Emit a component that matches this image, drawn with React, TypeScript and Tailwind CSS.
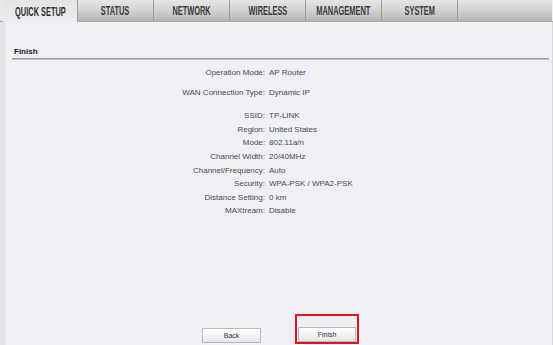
const tabs = ['QUICK SETUP', 'STATUS', 'NETWORK', 'WIRELESS', 'MANAGEMENT', 'SYSTEM'];

const rows: { label: string; value: string; gap: string }[] = [
  { label: 'Operation Mode:', value: 'AP Router', gap: 'mt-0' },
  { label: 'WAN Connection Type:', value: 'Dynamic IP', gap: 'mt-[6px]' },
  { label: 'SSID:', value: 'TP-LINK', gap: 'mt-[10px]' },
  { label: 'Region:', value: 'United States', gap: 'mt-0' },
  { label: 'Mode:', value: '802.11a/n', gap: 'mt-0' },
  { label: 'Channel Width:', value: '20/40MHz', gap: 'mt-0' },
  { label: 'Channel/Frequency:', value: 'Auto', gap: 'mt-0' },
  { label: 'Security:', value: 'WPA-PSK / WPA2-PSK', gap: 'mt-0' },
  { label: 'Distance Setting:', value: '0 km', gap: 'mt-0' },
  { label: 'MAXtream:', value: 'Disable', gap: 'mt-0' },
];

export default function App() {
  return (
    <div className="w-[553px] h-[345px] overflow-hidden bg-[#eff0f5] flex flex-col font-['Liberation_Sans',Arial,sans-serif]">
      {/* Tab bar */}
      <div className="h-[22px] flex shrink-0 bg-gradient-to-b from-[#e6e6e6] via-[#d2d2d2] to-[#b4b4b4] border-b border-[#a9a9a9]">
        <div className="w-[3px] bg-[#e9e9ec]" />
        {tabs.map((t, i) => (
          <div
            key={t}
            className={
              i === 0
                ? "w-[74px] h-[22px] -mb-px flex items-center justify-center bg-gradient-to-b from-[#e4e4e6] to-[#ececf0] text-[#2e2e2e]"
                : "w-[76px] flex items-center justify-center border-l border-[#9c9c9c] text-[#3a3a3a]"
            }
          >
            <span className="inline-block whitespace-nowrap font-bold text-[13px] leading-none scale-x-[0.57]">
              {t}
            </span>
          </div>
        ))}
        <div className="flex-1 border-l border-[#9c9c9c] border-r border-r-[#f0f0f0]" />
      </div>

      {/* Content */}
      <div className="flex-1 flex border-l-[5px] border-[#e3e4e8] border-r border-r-[#d8d8dc]">
        <div className="flex-1 flex flex-col pl-[7px] pr-[3px]">
          <div className="mt-[23px] h-[13px] pl-[2px] text-[8px] font-bold text-[#111] leading-[13px]">Finish</div>
          <div className="h-[2px] bg-gradient-to-b from-[#8c8c8c] to-[#cfcfcf]" />

          <div className="mt-[6px] flex flex-col text-[8px] text-[#4a4a4a] leading-[13.6px]">
            {rows.map((r) => (
              <div key={r.label} className={`flex ${r.gap}`}>
                <div className="w-[253px] text-right">{r.label}</div>
                <div className="pl-[4px]">{r.value}</div>
              </div>
            ))}
          </div>

          <div className="flex-1" />

          <div className="flex items-end pl-[190px] pb-[1px]">
            <button className="w-[59px] h-[15px] mb-[1px] border border-[#b9b9bd] bg-gradient-to-b from-[#ffffff] to-[#e6e6ea] text-[7px] text-[#333] leading-none">
              Back
            </button>
            <div className="ml-[34px] w-[64px] h-[30px] border-2 border-[#e0141e] flex items-end justify-center">
              <button className="w-[58px] h-[15px] border border-[#b9b9bd] bg-gradient-to-b from-[#ffffff] to-[#e6e6ea] text-[7px] text-[#333] leading-none">
                Finish
              </button>
            </div>
          </div>
        </div>
      </div>
    </div>
  );
}
